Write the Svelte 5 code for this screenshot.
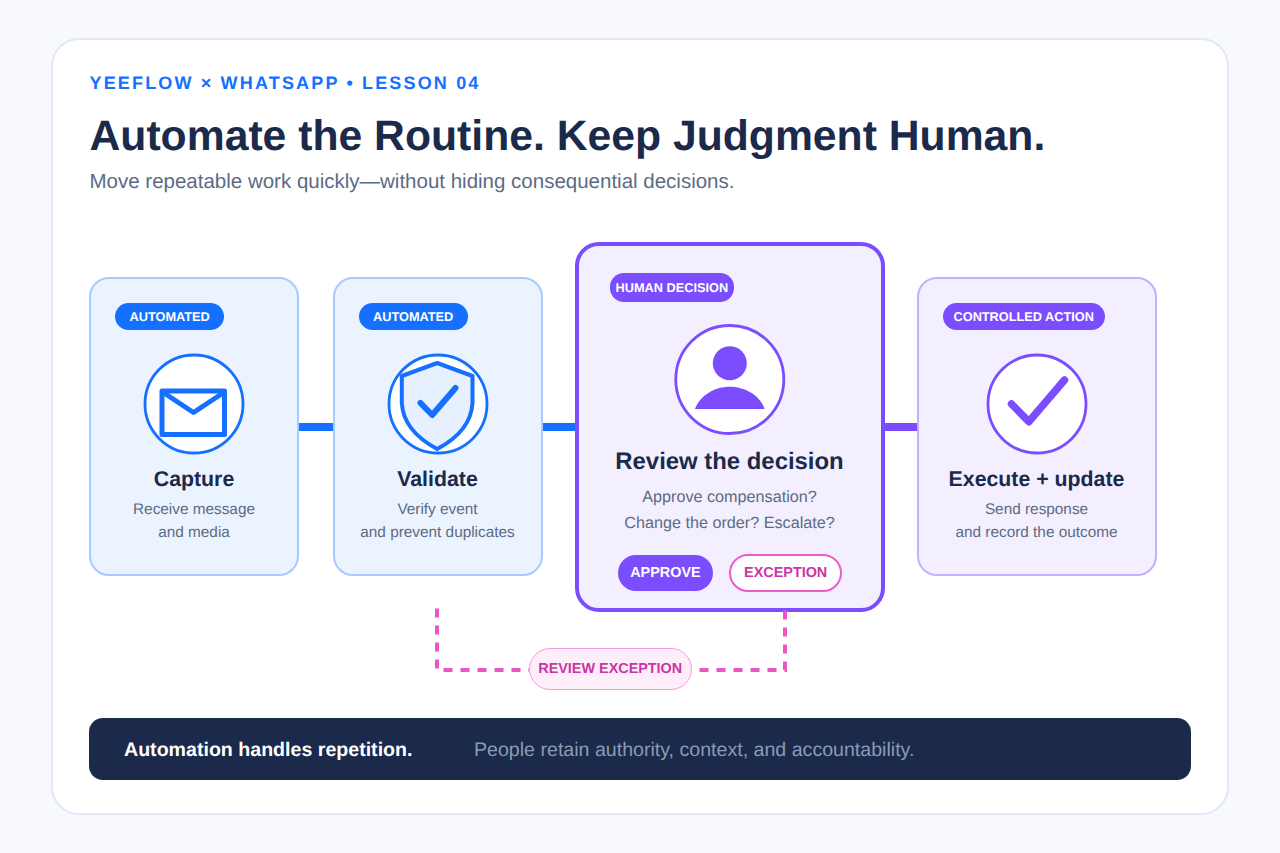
<script lang="ts">
	const desc = {
		capture: ['Receive message', 'and media'],
		validate: ['Verify event', 'and prevent duplicates'],
		review: ['Approve compensation?', 'Change the order? Escalate?'],
		execute: ['Send response', 'and record the outcome']
	};
</script>

<div class="page">
	<main class="panel">
		<header class="head">
			<p class="eyebrow">YEEFLOW × WHATSAPP • LESSON 04</p>
			<h1>Automate the Routine. Keep Judgment Human.</h1>
			<p class="sub">Move repeatable work quickly—without hiding consequential decisions.</p>
		</header>

		<section class="flow">
			<article class="step step--blue step--narrow">
				<span class="badge badge--blue">AUTOMATED</span>
				<svg class="icon" viewBox="0 0 102 102" width="102" height="102">
					<circle cx="51" cy="51" r="49" fill="#fff" stroke="#1570ff" stroke-width="2.8" />
					<rect x="19" y="38" width="62.5" height="43.5" fill="none" stroke="#1570ff" stroke-width="5" stroke-linejoin="round" />
					<path d="M19.5 39 L50.5 59.5 L81.5 39" fill="none" stroke="#1570ff" stroke-width="5" stroke-linejoin="round" />
				</svg>
				<h2>Capture</h2>
				{#each desc.capture as line}<p class="line">{line}</p>{/each}
			</article>

			<div class="link link--blue"></div>

			<article class="step step--blue step--narrow">
				<span class="badge badge--blue">AUTOMATED</span>
				<svg class="icon" viewBox="0 0 102 102" width="102" height="102">
					<circle cx="51" cy="51" r="49" fill="#fff" stroke="#1570ff" stroke-width="2.8" />
					<path d="M50.2 10 L85.5 23 V50 Q84 78 50.2 96 Q16.4 78 14.8 50 V23 Z" fill="#e6f0ff" stroke="#1570ff" stroke-width="4" stroke-linejoin="round" />
					<path d="M33.5 50 L45.2 62 L68.5 35" fill="none" stroke="#1570ff" stroke-width="6" stroke-linecap="round" stroke-linejoin="round" />
				</svg>
				<h2>Validate</h2>
				{#each desc.validate as line}<p class="line">{line}</p>{/each}
			</article>

			<div class="link link--blue link--short"></div>

			<article class="step step--main">
				<span class="badge badge--purple badge--main">HUMAN DECISION</span>
				<svg class="icon icon--main" viewBox="0 0 112 112" width="112" height="112">
					<circle cx="55.8" cy="55.5" r="54" fill="#fff" stroke="#7c4dff" stroke-width="2.8" />
					<circle cx="55.8" cy="39.3" r="17" fill="#7c4dff" />
					<path d="M21 85 C26 71 41 62.7 55.8 62.7 C70.6 62.7 86 71 90.6 85 Z" fill="#7c4dff" />
				</svg>
				<h2 class="main-title">Review the decision</h2>
				{#each desc.review as line}<p class="line line--main">{line}</p>{/each}
				<div class="actions">
					<span class="btn btn--approve">APPROVE</span>
					<span class="btn btn--exception">EXCEPTION</span>
				</div>
			</article>

			<div class="link link--purple"></div>

			<article class="step step--purple step--wide">
				<span class="badge badge--purple">CONTROLLED ACTION</span>
				<svg class="icon" viewBox="0 0 102 102" width="102" height="102">
					<circle cx="51" cy="51" r="49" fill="#fff" stroke="#7c4dff" stroke-width="2.8" />
					<path d="M25.5 51 L42.8 68.7 L78.5 27" fill="none" stroke="#7c4dff" stroke-width="7.5" stroke-linecap="round" stroke-linejoin="round" />
				</svg>
				<h2>Execute + update</h2>
				{#each desc.execute as line}<p class="line">{line}</p>{/each}
			</article>
		</section>

		<section class="loop">
			<svg class="loop__lines" viewBox="0 0 1102 107" width="1102" height="107">
				<path d="M348 -3.5 V58 H440" />
				<path d="M696 -1.5 V58 H603" />
			</svg>
			<span class="loop__pill">REVIEW EXCEPTION</span>
		</section>

		<footer class="bar">
			<strong>Automation handles repetition.</strong>
			<span>People retain authority, context, and accountability.</span>
		</footer>
	</main>
</div>

<style>
	:global(body) {
		margin: 0;
		background: #f7f9fd;
		font-family: 'Liberation Sans', Arial, sans-serif;
		text-rendering: geometricPrecision;
	}

	.page {
		box-sizing: border-box;
		height: 853px;
		padding: 38px 51px;
	}

	.panel {
		box-sizing: border-box;
		height: 777px;
		padding: 33px 36px 0;
		background: #fff;
		border: 2px solid #dfe8f4;
		border-radius: 28px;
	}

	.head {
		height: 168.5px;
		padding-left: 0.5px;
		box-sizing: border-box;
	}

	.eyebrow {
		margin: 0;
		font-size: 18px;
		line-height: 21px;
		font-weight: 700;
		letter-spacing: 2.16px;
		color: #1570ff;
	}

	h1 {
		margin: 16px 0 0;
		font-size: 42.7px;
		line-height: 52px;
		font-weight: 700;
		color: #1b2a4a;
	}

	.sub {
		margin: 8px 0 0;
		font-size: 20.5px;
		line-height: 24px;
		color: #5b6b85;
	}

	.flow {
		display: flex;
		align-items: center;
		height: 370px;
	}

	.step {
		box-sizing: border-box;
		display: flex;
		flex-direction: column;
		align-items: center;
		flex: none;
		height: 299.5px;
		padding-top: 24px;
		border: 2px solid;
		border-radius: 20px;
	}

	.step--narrow {
		width: 210px;
	}

	.step--wide {
		width: 240px;
	}

	.step--blue {
		background: #ebf3ff;
		border-color: #a6ccff;
	}

	.step--purple {
		background: #f4efff;
		border-color: #c4b0ff;
	}

	.step--main {
		width: 310px;
		height: 370px;
		padding-top: 27.5px;
		background: #f4efff;
		border: 4px solid #7c4dff;
		border-radius: 24px;
	}

	.badge {
		align-self: flex-start;
		margin-left: 24px;
		padding: 0 14.5px;
		height: 27px;
		border-radius: 14px;
		font-size: 12.75px;
		line-height: 28px;
		font-weight: 700;
		color: #fff;
	}

	.badge--blue {
		background: #1570ff;
	}

	.badge--purple {
		background: #7c4dff;
		padding: 0 11px;
	}

	.badge--main {
		margin-left: 31px;
		height: 29px;
		line-height: 30px;
		padding: 0 6px;
	}

	.icon {
		display: block;
		margin-top: 23px;
	}

	.icon--main {
		margin-top: 22px;
	}

	h2 {
		margin: 10.5px 0 4.5px;
		font-size: 21.3px;
		line-height: 28px;
		font-weight: 700;
		color: #1b2a4a;
	}

	.main-title {
		margin: 11px 0 6.5px;
		font-size: 23.9px;
		line-height: 30px;
	}

	.line {
		margin: 0;
		font-size: 15.35px;
		line-height: 23px;
		color: #5b6b85;
	}

	.line--main {
		font-size: 16.2px;
		line-height: 26px;
	}

	.actions {
		display: flex;
		align-items: center;
		gap: 16.5px;
		margin-top: 18px;
		padding-left: 1.5px;
	}

	.btn {
		box-sizing: border-box;
		padding: 0 12px;
		border-radius: 19px;
		font-size: 14.4px;
		font-weight: 700;
	}

	.btn--approve {
		height: 36px;
		line-height: 37px;
		background: #7c4dff;
		color: #fff;
	}

	.btn--exception {
		height: 38px;
		line-height: 35px;
		padding: 0 13px;
		background: #fff;
		border: 2px solid #ea5cc9;
		color: #c935a5;
	}

	.link {
		flex: none;
		width: 33.5px;
		height: 8px;
	}

	.link--short {
		width: 32px;
	}

	.link--blue {
		background: #1570ff;
	}

	.link--purple {
		width: 32px;
		background: #7c4dff;
	}

	.loop {
		position: relative;
		display: flex;
		align-items: flex-start;
		height: 106.5px;
		padding-left: 440px;
	}

	.loop__lines {
		position: absolute;
		left: 0;
		top: 0;
		overflow: visible;
		fill: none;
		stroke: #ec55c6;
		stroke-width: 4;
		stroke-dasharray: 9 8;
	}

	.loop__pill {
		position: relative;
		box-sizing: border-box;
		margin-top: 36.5px;
		width: 162.5px;
		height: 41.5px;
		border: 1.5px solid #f39ce0;
		border-radius: 21px;
		background: #fdeefa;
		font-size: 14.4px;
		line-height: 41px;
		font-weight: 700;
		text-align: center;
		color: #c935a5;
	}

	.bar {
		box-sizing: border-box;
		display: flex;
		align-items: center;
		height: 62px;
		padding: 3px 0 0 35px;
		border-radius: 14px;
		background: #1b2a4a;
		font-size: 19.6px;
	}

	.bar strong {
		width: 350px;
		flex: none;
		color: #fff;
	}

	.bar span {
		color: #8a9ab5;
	}
</style>
